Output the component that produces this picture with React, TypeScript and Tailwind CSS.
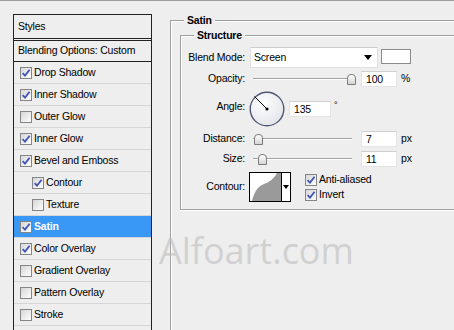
import React from "react";

function Check({ checked }: { checked: boolean }) {
  return (
    <span className="w-[12px] h-[12px] shrink-0 border border-[#858585] bg-[linear-gradient(135deg,#d6d6d6,#ffffff)] flex items-center justify-center">
      {checked && (
        <svg width="10" height="10" viewBox="0 0 10 10">
          <path d="M1.6 5.2 L4 7.6 L8.6 1.8" stroke="#3f54b8" strokeWidth="1.8" fill="none" />
        </svg>
      )}
    </span>
  );
}

type Item = { label: string; checked: boolean; indent?: boolean; selected?: boolean };

const items: Item[] = [
  { label: "Drop Shadow", checked: true },
  { label: "Inner Shadow", checked: true },
  { label: "Outer Glow", checked: false },
  { label: "Inner Glow", checked: true },
  { label: "Bevel and Emboss", checked: true },
  { label: "Contour", checked: true, indent: true },
  { label: "Texture", checked: false, indent: true },
  { label: "Satin", checked: true, selected: true },
  { label: "Color Overlay", checked: true },
  { label: "Gradient Overlay", checked: false },
  { label: "Pattern Overlay", checked: false },
  { label: "Stroke", checked: false },
];

function Slider({ pos }: { pos: number }) {
  return (
    <div className="relative w-[108px] h-[16px] flex items-center shrink-0">
      <div className="ml-[3px] w-[99px] h-[2px] border-t border-t-[#a3a3a3] border-b border-b-white" />
      <div
        className="absolute top-[3px] w-[9px] h-[11px] border border-[#7b7b7b] rounded-t-[4px] bg-[linear-gradient(180deg,#ffffff,#d4d4d4)]"
        style={{ left: pos }}
      />
    </div>
  );
}

function Field({ w, children }: { w: string; children: React.ReactNode }) {
  return (
    <div className={`${w} h-[16px] bg-white border border-[#e4e4e4] border-t-[#cfcfcf] pl-[4px] leading-[14px] shrink-0`}>
      {children}
    </div>
  );
}

function Label({ children }: { children: React.ReactNode }) {
  return <div className="w-[64px] text-right shrink-0">{children}</div>;
}

export default function App() {
  return (
    <div className="relative w-[454px] h-[330px] overflow-hidden bg-[#eeeeee] border-t border-[#9c9c9c] font-['Liberation_Sans',Arial,sans-serif] text-[10.5px] tracking-[-0.2px] text-black">
      <div className="flex h-full">
        {/* Left list */}
        <div className="ml-[13px] mt-[13px] w-[139px] shrink-0 border-l border-r border-t border-[#222] flex flex-col">
          <div className="h-[26px] border-b-[3px] border-double border-[#222] flex items-center pl-[4px]">Styles</div>
          <div className="h-[21px] border-b border-[#222] flex items-center pl-[4px]">Blending Options: Custom</div>
          {items.map((it) => (
            <div
              key={it.label}
              className={`h-[22px] border-b border-[#d6d6d6] flex items-center ${it.indent ? "pl-[18px]" : "pl-[6px]"} ${
                it.selected ? "bg-[#3997f5] text-white font-bold" : ""
              }`}
            >
              <Check checked={it.checked} />
              <span className="ml-[2px]">{it.label}</span>
            </div>
          ))}
        </div>

        {/* Right panel */}
        <fieldset className="ml-[18px] mt-[13px] w-[300px] shrink-0 border-l border-t border-[#a0a0a0] shadow-[inset_1px_1px_0_#ffffff]">
          <legend className="ml-[13px] px-[3px] font-bold leading-[12px] bg-[#eeeeee]">Satin</legend>
          <fieldset className="ml-[9px] mt-[3px] w-[300px] border-l border-t border-b border-[#a0a0a0] shadow-[inset_1px_1px_0_#ffffff,0_1px_0_#ffffff]">
            <legend className="ml-[13px] px-[3px] font-bold leading-[12px] bg-[#eeeeee]">Structure</legend>
            <div className="pt-[6px] pb-[7px] flex flex-col">
              {/* Blend mode */}
              <div className="flex items-center h-[21px]">
                <Label>Blend Mode:</Label>
                <div className="ml-[5px] w-[128px] h-[21px] bg-white border border-[#e0e0e0] border-t-[#cccccc] flex items-center pl-[3px] shrink-0">
                  <span className="flex-1">Screen</span>
                  <svg width="8" height="5" viewBox="0 0 8 5" className="mr-[5px]">
                    <path d="M0 0 L8 0 L4 5 Z" fill="#000" />
                  </svg>
                </div>
                <div className="ml-[3px] w-[30px] h-[15px] bg-white border border-[#8c8c8c] shrink-0 -mt-[2px]" />
              </div>
              {/* Opacity */}
              <div className="flex items-center h-[16px] mt-[3px]">
                <Label>Opacity:</Label>
                <div className="ml-[5px]">
                  <Slider pos={97} />
                </div>
                <div className="ml-[3px]">
                  <Field w="w-[36px]">100</Field>
                </div>
                <span className="ml-[4px]">%</span>
              </div>
              {/* Angle */}
              <div className="flex items-center h-[36px] mt-[4px]">
                <div className="w-[64px] text-right shrink-0 -mt-[4px]">Angle:</div>
                <svg width="36" height="36" viewBox="0 0 36 36" className="ml-[4px] shrink-0">
                  <defs>
                    <radialGradient id="dg" cx="0.4" cy="0.35" r="0.7">
                      <stop offset="0" stopColor="#ffffff" />
                      <stop offset="1" stopColor="#e2e4ea" />
                    </radialGradient>
                  </defs>
                  <circle cx="18" cy="18" r="16.8" fill="url(#dg)" stroke="#4d5873" strokeWidth="1.4" />
                  <line x1="18" y1="18" x2="5.5" y2="5.5" stroke="#000" strokeWidth="1" />
                  <circle cx="18" cy="18" r="1.6" fill="#000" />
                </svg>
                <div className="ml-[4px]">
                  <Field w="w-[42px]">135</Field>
                </div>
                <span className="ml-[3px] self-start mt-[10px] text-[9px] leading-[9px]">°</span>
              </div>
              {/* Distance */}
              <div className="flex items-center h-[16px] mt-[4px]">
                <Label>Distance:</Label>
                <div className="ml-[5px]">
                  <Slider pos={4} />
                </div>
                <div className="ml-[3px]">
                  <Field w="w-[36px]">7</Field>
                </div>
                <span className="ml-[4px]">px</span>
              </div>
              {/* Size */}
              <div className="flex items-center h-[16px] mt-[4px]">
                <Label>Size:</Label>
                <div className="ml-[5px]">
                  <Slider pos={8} />
                </div>
                <div className="ml-[3px]">
                  <Field w="w-[36px]">11</Field>
                </div>
                <span className="ml-[4px]">px</span>
              </div>
              {/* Contour */}
              <div className="flex items-center h-[30px] mt-[5px]">
                <Label>Contour:</Label>
                <div className="ml-[4px] w-[42px] h-[30px] border border-black bg-white flex shrink-0">
                  <svg width="31" height="28" viewBox="0 0 31 28" className="shrink-0">
                    <path d="M2 28 C4 20 7 14 13 11.5 C19 9 23 7 27 0 L31 0 L31 28 Z" fill="#9a9a9a" />
                  </svg>
                  <div className="flex-1 border-l border-black flex items-center justify-center">
                    <svg width="6" height="4" viewBox="0 0 6 4">
                      <path d="M0 0 L6 0 L3 4 Z" fill="#000" />
                    </svg>
                  </div>
                </div>
                <div className="ml-[14px] flex flex-col gap-[3px]">
                  <div className="flex items-center h-[12px]">
                    <Check checked />
                    <span className="ml-[2px]">Anti-aliased</span>
                  </div>
                  <div className="flex items-center h-[12px]">
                    <Check checked />
                    <span className="ml-[2px]">Invert</span>
                  </div>
                </div>
              </div>
            </div>
          </fieldset>
        </fieldset>
      </div>

      <div className="absolute left-[159px] top-[232px] font-['Open_Sans',sans-serif] text-[36px] leading-none tracking-normal text-[#bdbdbd]/60">
        Alfoart.com
      </div>
    </div>
  );
}
